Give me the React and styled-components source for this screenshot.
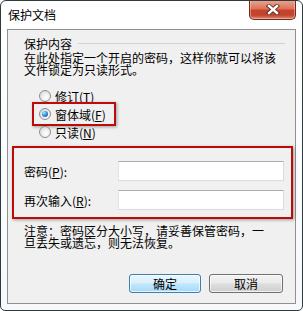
import React from "react";
import styled, { createGlobalStyle } from "styled-components";

const GlobalStyle = createGlobalStyle`
  html, body {
    margin: 0;
    padding: 0;
    background: #ffffff;
  }
  body {
    font-family: "Noto Sans CJK SC", "Liberation Sans", sans-serif;
    font-size: 12px;
    color: #000;
  }
`;

const Window = styled.div`
  box-sizing: border-box;
  width: 303px;
  height: 311px;
  border: 1px solid #2f3a3c;
  border-radius: 6px 6px 5px 5px;
  background: linear-gradient(#ffffff, #f6f8fa);
  display: flex;
  flex-direction: column;
  overflow: hidden;
`;

const TitleBar = styled.div`
  height: 28px;
  display: flex;
  justify-content: space-between;
  align-items: flex-start;
  padding-left: 7px;
  flex-shrink: 0;
`;

const Title = styled.div`
  margin-top: 7px;
  line-height: 13px;
  font-size: 12px;
`;

const CloseButton = styled.div`
  box-sizing: border-box;
  width: 47px;
  height: 20px;
  margin-top: -1px;
  margin-right: 6px;
  border: 1px solid #6d2a1f;
  border-top: none;
  border-radius: 0 0 5px 5px;
  background: linear-gradient(#eaa894 0%, #dc735b 45%, #c9402a 55%, #c3452e 80%, #e08a6f 100%);
  box-shadow: inset 0 0 0 1px rgba(255, 220, 200, 0.45);
  display: flex;
  align-items: center;
  justify-content: center;
`;

const Panel = styled.div`
  flex: 1;
  margin: 0 6px 6px 6px;
  border: 1px solid #8f9090;
  background: #f0f0f0;
  padding: 7px 10px 0 16px;
  display: flex;
  flex-direction: column;
`;

const GroupHeader = styled.div`
  display: flex;
  align-items: center;
  gap: 6px;
  height: 13px;
  line-height: 13px;
`;

const GroupLine = styled.div`
  flex: 1;
  height: 1px;
  background: #d3d3c6;
`;

const Text = styled.div`
  margin-top: ${(p) => p.$mt || 0}px;
  line-height: 12px;
  white-space: nowrap;
`;

const RadioGroup = styled.div`
  margin-top: 11px;
  display: flex;
  flex-direction: column;
`;

const RadioRow = styled.div`
  position: relative;
  height: 18px;
  display: flex;
  align-items: center;
  gap: 4px;
  padding-left: 15px;

  ${(p) =>
    p.$highlight &&
    `
    &::after {
      content: "";
      position: absolute;
      left: 8px;
      top: -3px;
      width: 84px;
      height: 24px;
      box-sizing: border-box;
      border: 2px solid #bf0a0a;
      box-shadow: 1px 1px 3px rgba(0, 0, 0, 0.35);
    }
  `}
`;

const RadioCircle = styled.span`
  box-sizing: border-box;
  width: 12px;
  height: 12px;
  border-radius: 50%;
  border: 1px solid #8e8f8f;
  background: radial-gradient(circle at 60% 65%, #ffffff 0%, #f0f0f0 40%, #c9ccd1 100%);
  display: flex;
  align-items: center;
  justify-content: center;

  &::before {
    content: "";
    display: ${(p) => (p.$checked ? "block" : "none")};
    width: 6px;
    height: 6px;
    border-radius: 50%;
    background: radial-gradient(circle at 35% 30%, #b8e4fb 0%, #2d8ad4 50%, #0d4a86 100%);
  }
`;

const Key = styled.span`
  text-decoration: underline;
`;

const FieldsBox = styled.div`
  margin: 5px -8px 0 -12px;
  box-sizing: border-box;
  height: 73px;
  border: 2px solid #bf0a0a;
  box-shadow: 1px 1px 3px rgba(0, 0, 0, 0.35);
  padding: 13px 7px 7px 10px;
  display: grid;
  grid-template-columns: 94px 1fr;
  grid-auto-rows: 20px;
  row-gap: 9px;
  align-items: center;
`;

const Input = styled.div`
  box-sizing: border-box;
  height: 20px;
  background: #ffffff;
  border: 1px solid #d8dce2;
  border-top-color: #abadb3;
  border-left-color: #e0e3e8;
`;

const ButtonRow = styled.div`
  margin-top: 25px;
  display: flex;
  justify-content: flex-end;
  gap: 8px;
  padding-right: 2px;
`;

const Button = styled.div`
  box-sizing: border-box;
  width: ${(p) => p.$w}px;
  height: 19px;
  border-radius: 3px;
  border: 1px solid ${(p) => (p.$default ? "#3c7fb1" : "#707070")};
  background: ${(p) =>
    p.$default
      ? "linear-gradient(#eaf6fd 0%, #d9f0fc 45%, #bee6fd 55%, #a7d9f5 100%)"
      : "linear-gradient(#f2f2f2 0%, #ebebeb 45%, #dddddd 55%, #cfcfcf 100%)"};
  box-shadow: inset 0 0 0 1px rgba(255, 255, 255, 0.7);
  display: flex;
  align-items: center;
  justify-content: center;
  line-height: 12px;
`;

export default function App() {
  return (
    <>
      <GlobalStyle />
      <Window>
        <TitleBar>
          <Title>保护文档</Title>
          <CloseButton>
            <svg width="14" height="11" viewBox="0 0 14 11">
              <path d="M3 2 L11 9 M11 2 L3 9" stroke="#5a2a24" strokeWidth="4.2" strokeLinecap="square" />
              <path d="M3 2 L11 9 M11 2 L3 9" stroke="#ffffff" strokeWidth="2.4" strokeLinecap="square" />
            </svg>
          </CloseButton>
        </TitleBar>
        <Panel>
          <GroupHeader>
            <span>保护内容</span>
            <GroupLine />
          </GroupHeader>
          <Text $mt={2}>
            在此处指定一个开启的密码，这样你就可以将该
            <br />
            文件锁定为只读形式。
          </Text>
          <RadioGroup>
            <RadioRow>
              <RadioCircle />
              <span>
                修订(<Key>T</Key>)
              </span>
            </RadioRow>
            <RadioRow $highlight>
              <RadioCircle $checked />
              <span>
                窗体域(<Key>F</Key>)
              </span>
            </RadioRow>
            <RadioRow>
              <RadioCircle />
              <span>
                只读(<Key>N</Key>)
              </span>
            </RadioRow>
          </RadioGroup>
          <FieldsBox>
            <span>
              密码(<Key>P</Key>):
            </span>
            <Input />
            <span>
              再次输入(<Key>R</Key>):
            </span>
            <Input />
          </FieldsBox>
          <Text $mt={6}>
            注意：密码区分大小写，请妥善保管密码，一
            <br />
            旦丢失或遗忘，则无法恢复。
          </Text>
          <ButtonRow>
            <Button $w={72} $default>
              确定
            </Button>
            <Button $w={74}>取消</Button>
          </ButtonRow>
        </Panel>
      </Window>
    </>
  );
}
